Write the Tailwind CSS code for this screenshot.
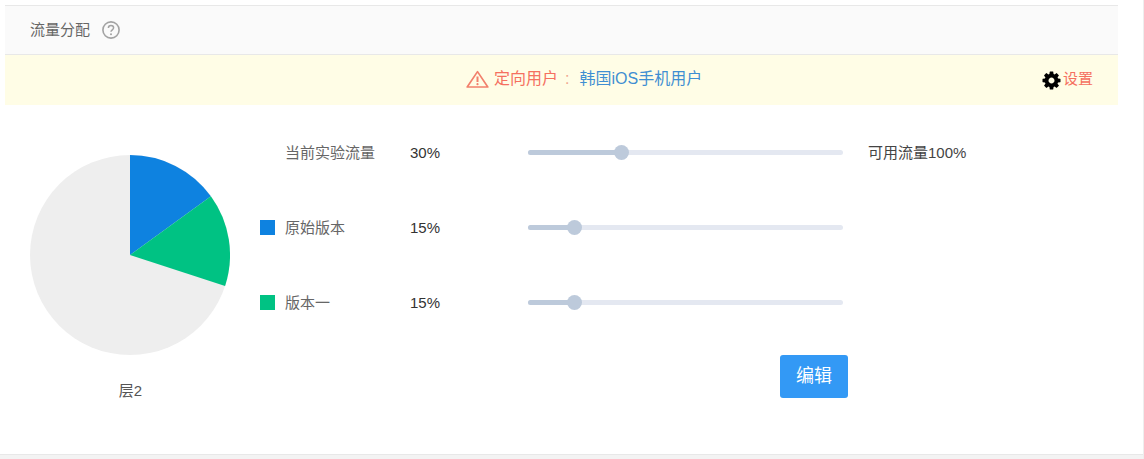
<!DOCTYPE html>
<html lang="zh-CN">
<head>
    <meta charset="UTF-8">
    <title>流量分配</title>
    <script src="https://cdn.jsdelivr.net/npm/@tailwindcss/browser@4"></script>
</head>
<body class="bg-white">
    <div class="w-[1144px] h-[459px] flex flex-col overflow-hidden border-r border-[#eeeeee] text-[15px] text-[#666666] font-['Liberation_Sans','Noto_Sans_CJK_SC',sans-serif]">
        <div class="flex-1 pt-[5px] pl-[5px]">
            <div class="w-[1113px]">
                <!-- Header -->
                <div class="h-[50px] flex items-center pl-[25px] bg-[#fafafa] border-y border-[#e8e8e8]">
                    <span>流量分配</span>
                    <svg class="ml-[12px] w-[18px] h-[18px]" viewBox="0 0 18 18" fill="none">
                        <circle cx="9" cy="9" r="8.1" stroke="#a3a3a3" stroke-width="1.6"/>
                        <path d="M6.4 7C6.4 5.5 7.6 4.5 9 4.5c1.5 0 2.6 1 2.6 2.3 0 2-2.6 2-2.6 4" stroke="#a3a3a3" stroke-width="1.5"/>
                        <circle cx="9" cy="13.2" r="1" fill="#a3a3a3"/>
                    </svg>
                </div>

                <!-- Notice -->
                <div class="relative h-[50px] flex items-center pl-[461px] bg-[#fffde6] pb-[3px] text-[16px]">
                    <svg class="w-[23px] h-[18px] mr-[5px]" viewBox="0 0 23 18" fill="none">
                        <path d="M11.5 1.6 21.8 17H1.2Z" stroke="#f2806c" stroke-width="1.7" stroke-linejoin="round"/>
                        <path d="M11.5 6.5v5.5" stroke="#f2806c" stroke-width="2"/>
                        <circle cx="11.5" cy="14.2" r="1.1" fill="#f2806c"/>
                    </svg>
                    <span class="text-[#f5705f]">定向用户</span>
                    <span class="ml-[7px] text-[#f0a58f]">:</span>
                    <span class="ml-[10px] text-[#3f8fd2]">韩国iOS手机用户</span>
                    <div class="absolute right-[25px] top-[13px] flex items-center text-[15px]">
                        <svg class="w-[21px] h-[21px] mr-[0.5px] mt-[2px]" viewBox="0 0 1792 1792" fill="#000000">
                            <path d="M1152 896q0-106-75-181t-181-75-181 75-75 181 75 181 181 75 181-75 75-181zm512-109v222q0 12-8 23t-20 13l-185 28q-19 54-39 91 35 50 107 138 10 12 10 25t-9 23q-27 37-99 108t-94 71q-12 0-26-9l-138-108q-44 23-91 38-16 136-29 186-7 28-36 28h-222q-14 0-24.5-8.5t-11.5-21.5l-28-184q-49-16-90-37l-141 107q-10 9-25 9-14 0-25-11-126-114-165-168-7-10-7-23 0-12 8-23 15-21 51-66.5t54-70.5q-27-50-41-99l-183-27q-13-2-21-12.5t-8-23.5v-222q0-12 8-23t19-13l186-28q14-46 39-92-40-57-107-138-10-12-10-24 0-10 9-23 26-36 98.5-107.5t94.5-71.5q13 0 26 10l138 107q44-23 91-38 16-136 29-186 7-28 36-28h222q14 0 24.5 8.5t11.5 21.5l28 184q49 16 90 37l142-107q9-9 24-9 13 0 25 10 129 119 165 170 7 8 7 22 0 12-8 23-15 21-51 66.5t-54 70.5q26 50 41 98l183 28q13 2 21 12.5t8 23.5z"/>
                        </svg>
                        <span class="text-[#f5705f]">设置</span>
                    </div>
                </div>

                <div class="flex">
                    <!-- Pie -->
                    <div class="w-[255px] pl-[25px] pt-[50px] shrink-0">
                        <svg class="w-[200px] h-[200px]" viewBox="0 0 200 200">
                            <circle cx="100" cy="100" r="100" fill="#eeeeee"/>
                            <path d="M100 100V0A100 100 0 0 1 180.9 41.2Z" fill="#0e82e0"/>
                            <path d="M100 100 180.9 41.2A100 100 0 0 1 195.1 130.9Z" fill="#00c283"/>
                        </svg>
                        <div class="w-[200px] mt-[25px] pl-[1px] text-center text-[#555555]">层2</div>
                    </div>

                    <!-- Rows -->
                    <div class="pt-[10px]">
                        <div class="h-[75px] flex items-center">
                            <span class="w-[15px] h-[15px] mr-[10px]"></span>
                            <span class="w-[125px] mt-[2px]">当前实验流量</span>
                            <span class="w-[118px] mt-[2px] text-[#333333]">30%</span>
                            <div class="relative w-[315px] h-[5px] rounded-full bg-[#e4e8f1]">
                                <div class="h-full w-[94px] rounded-full bg-[#bdcadb]"></div>
                                <div class="absolute left-[86px] top-[-5px] w-[15px] h-[15px] rounded-full bg-[#bdcadb]"></div>
                            </div>
                            <span class="ml-[25px] mt-[2px] text-[#444444]">可用流量100%</span>
                        </div>
                        <div class="h-[75px] flex items-center">
                            <span class="w-[15px] h-[15px] mr-[10px] bg-[#0e82e0]"></span>
                            <span class="w-[125px] mt-[2px]">原始版本</span>
                            <span class="w-[118px] mt-[2px] text-[#333333]">15%</span>
                            <div class="relative w-[315px] h-[5px] rounded-full bg-[#e4e8f1]">
                                <div class="h-full w-[47px] rounded-full bg-[#bdcadb]"></div>
                                <div class="absolute left-[39px] top-[-5px] w-[15px] h-[15px] rounded-full bg-[#bdcadb]"></div>
                            </div>
                        </div>
                        <div class="h-[75px] flex items-center">
                            <span class="w-[15px] h-[15px] mr-[10px] bg-[#00c283]"></span>
                            <span class="w-[125px] mt-[2px]">版本一</span>
                            <span class="w-[118px] mt-[2px] text-[#333333]">15%</span>
                            <div class="relative w-[315px] h-[5px] rounded-full bg-[#e4e8f1]">
                                <div class="h-full w-[47px] rounded-full bg-[#bdcadb]"></div>
                                <div class="absolute left-[39px] top-[-5px] w-[15px] h-[15px] rounded-full bg-[#bdcadb]"></div>
                            </div>
                        </div>
                        <div class="mt-[15px] pl-[520px]">
                            <button class="w-[68px] h-[43px] rounded-[3px] bg-[#3399f5] text-white text-[18px]">编辑</button>
                        </div>
                    </div>
                </div>
            </div>
        </div>
        <div class="h-[5px] border-t border-[#e8e8e8] bg-[#f3f3f3]"></div>
    </div>
</body>
</html>
